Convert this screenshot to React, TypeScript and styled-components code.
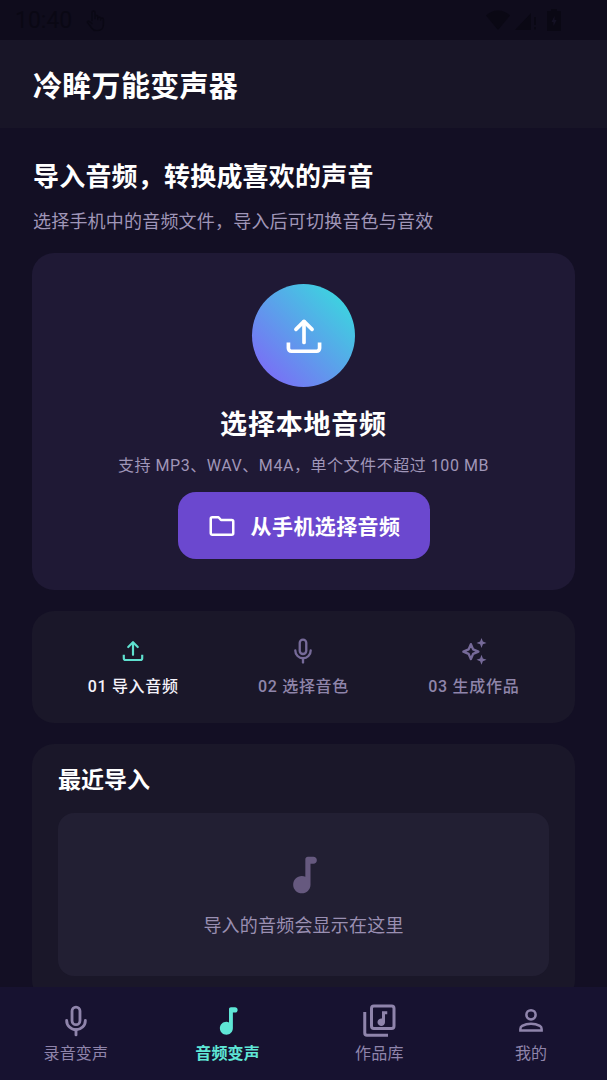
import React from "react";
import styled, { createGlobalStyle } from "styled-components";

const GlobalStyle = createGlobalStyle`
    html, body {
        margin: 0;
        padding: 0;
        background: #130f24;
    }
    * {
        box-sizing: border-box;
    }
`;

const UploadIcon: React.FC<{ size: number; color: string }> = ({ size, color }) => (
    <svg width={size} height={size} viewBox="0 0 24 24" fill="none" stroke={color} strokeWidth="2" strokeLinecap="round" strokeLinejoin="round">
        <path d="M12 15.5V4.2" />
        <path d="M7.6 8.4 12 4l4.4 4.4" />
        <path d="M3.5 15.5v3.2c0 .9.7 1.6 1.6 1.6h13.8c.9 0 1.6-.7 1.6-1.6v-3.2" strokeLinecap="butt" />
    </svg>
);

const MicIcon: React.FC<{ size: number; color: string }> = ({ size, color }) => (
    <svg width={size} height={size} viewBox="0 0 24 24" fill="none" stroke={color} strokeWidth="2" strokeLinecap="round">
        <rect x="9.2" y="2.2" width="5.6" height="12.4" rx="2.8" />
        <path d="M5.4 11.6c0 3.7 3 6.6 6.6 6.6s6.6-2.9 6.6-6.6" />
        <path d="M12 18.2v3.6" />
    </svg>
);

const SparkIcon: React.FC<{ size: number; color: string }> = ({ size, color }) => (
    <svg width={size} height={size} viewBox="0 0 24 24" fill="none" stroke={color} strokeWidth="1.9" strokeLinejoin="round">
        <path d="M9.5 6.5 11.3 10.7 15.5 12.5 11.3 14.3 9.5 18.5 7.7 14.3 3.5 12.5 7.7 10.7Z" />
        <path fill={color} stroke="none" d="M18 1.5l1.1 2.9 2.9 1.1-2.9 1.1L18 9.5l-1.1-2.9L14 5.500l2.900-1.100zM18 15l1.100 2.900 2.900 1.100-2.900 1.100L18 23l-1.100-2.900L14 19l2.900-1.100z" />
    </svg>
);

const NoteIcon: React.FC<{ size: number; color: string }> = ({ size, color }) => (
    <svg width={size} height={size} viewBox="0 0 24 24" fill={color}>
        <path d="M12.800 2.500c0-.9.700-1.500 1.500-1.500h3.300c1.200 0 2.100.9 2.100 2.100s-.9 2.100-2.100 2.100h-1.700v12.600c0 2.900-2.400 5.200-5.200 5.200s-5.200-2.300-5.200-5.200 2.300-5.200 5.200-5.200c.8 0 1.500.2 2.100.5z" />
    </svg>
);

const LibraryIcon: React.FC<{ size: number; color: string }> = ({ size, color }) => (
    <svg width={size} height={size} viewBox="0 0 24 24" fill="none" stroke={color} strokeWidth="2">
        <rect x="7" y="2" width="15" height="15" rx="1.600" />
        <path d="M2.500 6v14c0 .9.700 1.500 1.500 1.500h14" />
        <path fill={color} stroke="none" d="M14 5.500h3.500v2H16v5.300a2.500 2.500 0 1 1-2-2.450z" />
    </svg>
);

const PersonIcon: React.FC<{ size: number; color: string }> = ({ size, color }) => (
    <svg width={size} height={size} viewBox="0 0 24 24" fill="none" stroke={color} strokeWidth="2">
        <circle cx="12" cy="7" r="3.700" />
        <path d="M3.500 19.500v-1.200c0-1 .5-1.900 1.400-2.400 2-1.100 4.500-1.800 7.100-1.800s5.100.7 7.100 1.800c.9.500 1.400 1.400 1.400 2.400v1.200z" />
    </svg>
);

const FolderIcon: React.FC = () => (
    <svg width="30" height="30" viewBox="0 0 24 24" fill="none" stroke="#fff" strokeWidth="2" strokeLinejoin="round">
        <path d="M3 6.200c0-.7.500-1.200 1.200-1.200h5l2 2.200h8.600c.7 0 1.200.5 1.200 1.200v9.400c0 .7-.5 1.200-1.200 1.200H4.200c-.7 0-1.200-.5-1.200-1.200z" />
    </svg>
);

const HandIcon: React.FC = () => (
    <svg width="22" height="27" viewBox="0 0 22 24" fill="none" stroke="#0a0814" strokeWidth="1.500" strokeLinecap="round" strokeLinejoin="round">
        <path d="M7 12V4a1.500 1.500 0 0 1 3 0v6M10 10V8.500a1.400 1.400 0 0 1 2.800 0V11M12.800 10a1.400 1.400 0 0 1 2.800 0v1.500M15.600 11a1.400 1.400 0 0 1 2.800 0v5c0 3.500-2.200 6-5.500 6H11c-2 0-3.300-1-4.300-2.500L2.500 14c-.6-.9.700-2 1.600-1.200L7 15" />
    </svg>
);

const WifiIcon: React.FC = () => (
    <svg width="26" height="22" viewBox="0 0 24 22" fill="#0a0814">
        <path d="M0 6.500C3 3.500 7.300 1.500 12 1.500s9 2 12 5L12 21z" />
    </svg>
);

const SignalIcon: React.FC = () => (
    <svg width="22" height="22" viewBox="0 0 22 22" fill="#0a0814">
        <path d="M16 4v17H0z" />
        <path d="M19 8h2v8h-2zM19 18h2v2.500h-2z" />
    </svg>
);

const BatteryIcon: React.FC = () => (
    <svg width="14" height="24" viewBox="0 0 14 24" fill="#0a0814">
        <path d="M4 1h6v2h3c.6 0 1 .4 1 1v18c0 .6-.4 1-1 1H1c-.6 0-1-.4-1-1V4c0-.6.4-1 1-1h3z" />
        <path fill="#141124" d="M7.500 8 4.500 14h2v4l3-6h-2z" />
    </svg>
);

const steps = [
    { label: "01 导入音频", active: true, icon: <UploadIcon size={26} color="#5fe0cf" /> },
    { label: "02 选择音色", active: false, icon: <MicIcon size={28} color="#766a99" /> },
    { label: "03 生成作品", active: false, icon: <SparkIcon size={30} color="#766a99" /> },
];

const tabs = [
    { label: "录音变声", active: false, icon: <MicIcon size={34} color="#8f84ab" /> },
    { label: "音频变声", active: true, icon: <NoteIcon size={30} color="#5fe6d6" /> },
    { label: "作品库", active: false, icon: <LibraryIcon size={36} color="#8f84ab" /> },
    { label: "我的", active: false, icon: <PersonIcon size={30} color="#8f84ab" /> },
];

const App: React.FC = () => {
    return (
        <Screen>
            <GlobalStyle />
            <StatusBar>
                <StatusLeft>
                    <Clock>10:40</Clock>
                    <HandIcon />
                </StatusLeft>
                <StatusRight>
                    <WifiIcon />
                    <SignalIcon />
                    <BatteryIcon />
                </StatusRight>
            </StatusBar>
            <TopBar>
                <AppTitle>冷眸万能变声器</AppTitle>
            </TopBar>
            <Main>
                <Heading>导入音频，转换成喜欢的声音</Heading>
                <SubHeading>选择手机中的音频文件，导入后可切换音色与音效</SubHeading>
                <ImportCard>
                    <UploadCircle>
                        <UploadIcon size={44} color="#fff" />
                    </UploadCircle>
                    <ImportTitle>选择本地音频</ImportTitle>
                    <ImportHint>支持 MP3、WAV、M4A，单个文件不超过 100 MB</ImportHint>
                    <PickButton>
                        <FolderIcon />
                        <PickLabel>从手机选择音频</PickLabel>
                    </PickButton>
                </ImportCard>
                <StepsCard>
                    {steps.map((step) => (
                        <Step key={step.label}>
                            <StepIcon>{step.icon}</StepIcon>
                            <StepLabel $active={step.active}>{step.label}</StepLabel>
                        </Step>
                    ))}
                </StepsCard>
                <RecentCard>
                    <RecentTitle>最近导入</RecentTitle>
                    <EmptyBox>
                        <NoteIcon size={40} color="#66597f" />
                        <EmptyText>导入的音频会显示在这里</EmptyText>
                    </EmptyBox>
                </RecentCard>
            </Main>
            <BottomNav>
                {tabs.map((tab) => (
                    <Tab key={tab.label}>
                        <TabIcon>{tab.icon}</TabIcon>
                        <TabLabel $active={tab.active}>{tab.label}</TabLabel>
                    </Tab>
                ))}
            </BottomNav>
        </Screen>
    );
};

export default App;

const Screen = styled.div`
    background: #130f24;
    display: flex;
    flex-direction: column;
    font-family: Roboto, "Noto Sans CJK SC", sans-serif;
    height: 1080px;
    overflow: hidden;
    width: 607px;
`;

const StatusBar = styled.div`
    align-items: center;
    background: #0f0c1c;
    display: flex;
    flex-shrink: 0;
    height: 40px;
    justify-content: space-between;
    padding: 0 46px 0 15px;
`;

const StatusLeft = styled.div`
    align-items: center;
    display: flex;
    gap: 13px;
`;

const StatusRight = styled.div`
    align-items: center;
    display: flex;
    gap: 4px;

    svg:last-child {
        margin-left: 6px;
    }
`;

const Clock = styled.span`
    color: #0a0814;
    font-size: 23px;
`;

const TopBar = styled.div`
    align-items: center;
    background: #181527;
    display: flex;
    flex-shrink: 0;
    height: 88px;
    padding: 0 33px;
`;

const AppTitle = styled.h1`
    color: #fff;
    font-size: 29px;
    font-weight: 700;
    letter-spacing: 0.3px;
    margin: 0;
`;

const Main = styled.main`
    flex: 1;
    min-height: 0;
    overflow: hidden;
    padding: 30px 32px 0;
`;

const Heading = styled.h2`
    color: #fff;
    font-size: 26px;
    font-weight: 700;
    letter-spacing: 0.2px;
    line-height: 38px;
    margin: 0 0 0 1px;
`;

const SubHeading = styled.p`
    color: #a096b8;
    font-size: 18px;
    letter-spacing: 0.2px;
    line-height: 26px;
    margin: 13px 0 18px 1px;
`;

const ImportCard = styled.section`
    align-items: center;
    background: #1f1935;
    border-radius: 22px;
    display: flex;
    flex-direction: column;
    height: 337px;
    padding-top: 31px;
`;

const UploadCircle = styled.div`
    align-items: center;
    background: linear-gradient(45deg, #7b6cf6 10%, #3bd6df 90%);
    border-radius: 50%;
    display: flex;
    height: 103px;
    justify-content: center;
    width: 103px;
`;

const ImportTitle = styled.h3`
    color: #fff;
    font-size: 27px;
    font-weight: 700;
    letter-spacing: 0.8px;
    line-height: 38px;
    margin: 19px 0 0;
`;

const ImportHint = styled.p`
    color: #a096b8;
    font-size: 16px;
    letter-spacing: 0.55px;
    line-height: 22px;
    margin: 11px 0 0;
`;

const PickButton = styled.button`
    align-items: center;
    background: #6b48cf;
    border: none;
    border-radius: 18px;
    color: #fff;
    display: flex;
    font-family: inherit;
    font-size: 21px;
    font-weight: 700;
    gap: 14px;
    height: 67px;
    justify-content: center;
    letter-spacing: 0.4px;
    margin-top: 15px;
    width: 252px;
`;

const PickLabel = styled.span`
    line-height: 30px;
    margin-top: 3px;
`;

const StepsCard = styled.section`
    background: #1a1729;
    border-radius: 22px;
    display: grid;
    grid-template-columns: repeat(3, 1fr);
    height: 112px;
    margin-top: 21px;
    padding: 24px 16px 0;
`;

const Step = styled.div`
    align-items: center;
    display: flex;
    flex-direction: column;
`;

const StepIcon = styled.div`
    align-items: center;
    display: flex;
    height: 32px;
    justify-content: center;
`;

const StepLabel = styled.span<{ $active: boolean }>`
    color: ${(props) => (props.$active ? "#f4f2fa" : "#8f85aa")};
    font-size: 16px;
    font-weight: 500;
    letter-spacing: 0.7px;
    line-height: 24px;
    margin-top: 8px;
`;

const RecentCard = styled.section`
    background: #1a1729;
    border-radius: 22px;
    margin-top: 21px;
    padding: 22px 26px 26px;
`;

const RecentTitle = styled.h3`
    color: #fff;
    font-size: 23px;
    font-weight: 700;
    line-height: 30px;
    margin: 0;
`;

const EmptyBox = styled.div`
    align-items: center;
    background: #221f33;
    border-radius: 16px;
    display: flex;
    flex-direction: column;
    height: 163px;
    margin-top: 17px;
    padding-top: 42px;
`;

const EmptyText = styled.p`
    color: #9a8fb2;
    font-size: 18px;
    letter-spacing: 0.2px;
    line-height: 26px;
    margin: 18px 0 0;
`;

const BottomNav = styled.nav`
    background: #171230;
    display: grid;
    flex-shrink: 0;
    grid-template-columns: repeat(4, 1fr);
    height: 93px;
`;

const Tab = styled.div`
    align-items: center;
    display: flex;
    flex-direction: column;
    padding-top: 17px;
`;

const TabIcon = styled.div`
    align-items: center;
    display: flex;
    height: 34px;
    justify-content: center;
`;

const TabLabel = styled.span<{ $active: boolean }>`
    color: ${(props) => (props.$active ? "#5fe6d6" : "#8f84ab")};
    font-size: 16px;
    font-weight: ${(props) => (props.$active ? 700 : 400)};
    letter-spacing: 0.2px;
    line-height: 22px;
    margin-top: 5px;
`;
